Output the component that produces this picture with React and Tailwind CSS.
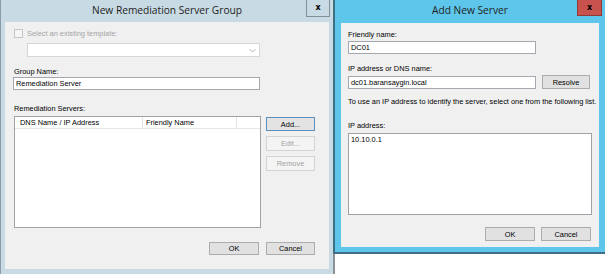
import React from "react";

const body = "font-['Liberation_Sans',Arial,sans-serif] text-[7.4px] leading-[9px]";

function Btn({ children, w = "w-[49px]", h = "h-[14px]", disabled, def }) {
  return (
    <div
      className={`${w} ${h} flex items-center justify-center border ${
        disabled
          ? "border-[#d3d3d3] bg-[#f4f4f4] text-[#a3a3a3]"
          : def
          ? "border-[#5a8fbd] bg-[#e3e3e3] text-black"
          : "border-[#adadad] bg-[#e1e1e1] text-black"
      }`}
    >
      {children}
    </div>
  );
}

function LeftDialog() {
  return (
    <div className="w-[333px] h-[274px] shrink-0 flex flex-col bg-[#c8dae3] border-l border-[#8a9ca5] pl-[4px] pr-[4px] pb-[5px]">
      <div className="relative h-[22px] shrink-0 flex items-center justify-center">
        <span className="font-['Open_Sans',sans-serif] text-[10.2px] text-[#1e1e1e] -mt-[1px]">
          New Remediation Server Group
        </span>
        <div className="absolute right-[-1px] top-0 w-[24px] h-[17px] border-l border-r border-b border-[#7f9099] bg-[#c8dae3] flex items-center justify-center">
          <span className="font-['DejaVu_Sans',sans-serif] font-bold text-[8px] leading-none text-black">x</span>
        </div>
      </div>
      <div className={`flex-1 bg-[#f0f0f0] flex flex-col ${body} text-black`}>
        <div className="mt-[7px] ml-[9px] flex items-center gap-[4px]">
          <div className="w-[9px] h-[9px] border border-[#c6c6c6] bg-[#f6f6f6]" />
          <span className="text-[#a4a4a4]">Select an existing template:</span>
        </div>
        <div className="mt-[5px] ml-[22px] w-[233px] h-[14px] border border-[#d6d6d6] bg-white flex items-center justify-end pr-[3px]">
          <svg width="7" height="5" viewBox="0 0 7 5">
            <path d="M0.5 1 L3.5 4 L6.5 1" fill="none" stroke="#a8a8a8" strokeWidth="0.9" />
          </svg>
        </div>
        <div className="mt-[10px] ml-[9px]">Group Name:</div>
        <div className="mt-[1px] ml-[8px] w-[247px] h-[13px] border border-[#a5a8ae] bg-white flex items-center pl-[2px]">
          Remediation Server
        </div>
        <div className="mt-[14px] ml-[9px]">Remediation Servers:</div>
        <div className="mt-[3px] ml-[9px] flex">
          <div className="w-[247px] h-[112px] border border-[#9fa3a8] bg-white flex flex-col">
            <div className="h-[12px] flex border-b border-[#e6e6e6]">
              <div className="w-[128px] border-r border-[#e3e3e3] pl-[5px] flex items-center">DNS Name / IP Address</div>
              <div className="w-[94px] border-r border-[#e3e3e3] pl-[3px] flex items-center">Friendly Name</div>
              <div className="flex-1" />
            </div>
          </div>
          <div className="ml-[5px] mt-[1px] flex flex-col gap-[5px]">
            <Btn def>Add...</Btn>
            <Btn disabled h="h-[15px]">Edit...</Btn>
            <Btn disabled h="h-[15px]">Remove</Btn>
          </div>
        </div>
        <div className="mt-[14px] flex justify-end gap-[7px] pr-[14px]">
          <Btn w="w-[50px]" h="h-[13px]">OK</Btn>
          <Btn w="w-[49px]" h="h-[13px]">Cancel</Btn>
        </div>
      </div>
    </div>
  );
}

function RightDialog() {
  return (
    <div className="flex-1 flex flex-col h-[274px]">
      <div className="h-[254px] shrink-0 flex flex-col bg-[#5ec6ea] border-l-2 border-b-2 border-[#3f6f84] pl-[6px] pr-[6px] pb-[5px]">
        <div className="relative h-[23px] shrink-0 flex items-center justify-center">
          <span className="font-['Open_Sans',sans-serif] text-[10.2px] text-[#1e1e1e] -mt-[1px]">
            Add New Server
          </span>
          <div className="absolute right-[-3px] top-0 w-[25px] h-[16px] border-l border-r border-b border-[#8e3a38] bg-[#c7524e] flex items-center justify-center">
            <span className="font-['DejaVu_Sans',sans-serif] font-bold text-[8px] leading-none text-black">x</span>
          </div>
        </div>
        <div className={`flex-1 bg-[#f0f0f0] flex flex-col pl-[7px] ${body} text-black`}>
          <div className="mt-[7px]">Friendly name:</div>
          <div className="mt-[2px] w-[188px] h-[13px] border border-[#a5a8ae] bg-white flex items-center pl-[2px]">DC01</div>
          <div className="mt-[10px]">IP address or DNS name:</div>
          <div className="mt-[2px] flex items-center gap-[6px]">
            <div className="w-[188px] h-[13px] border border-[#a5a8ae] bg-white flex items-center pl-[2px]">
              dc01.baransaygin.local
            </div>
            <Btn w="w-[48px]" h="h-[14px]">Resolve</Btn>
          </div>
          <div className="mt-[8px] whitespace-nowrap">
            To use an IP address to identify the server, select one from the following list.
          </div>
          <div className="mt-[15px]">IP address:</div>
          <div className="mt-[3px] w-[244px] h-[82px] border border-[#9fa3a8] bg-white pl-[2px] pt-[1px]">10.10.0.1</div>
          <div className="mt-[12px] flex gap-[6px] pl-[137px]">
            <Btn w="w-[50px]" h="h-[14px]">OK</Btn>
            <Btn w="w-[50px]" h="h-[14px]">Cancel</Btn>
          </div>
        </div>
      </div>
      <div className="flex-1 bg-white border-l-2 border-[#8d9296]" />
    </div>
  );
}

export default function App() {
  return (
    <div className="w-[605px] h-[274px] flex overflow-hidden bg-white">
      <LeftDialog />
      <RightDialog />
    </div>
  );
}
